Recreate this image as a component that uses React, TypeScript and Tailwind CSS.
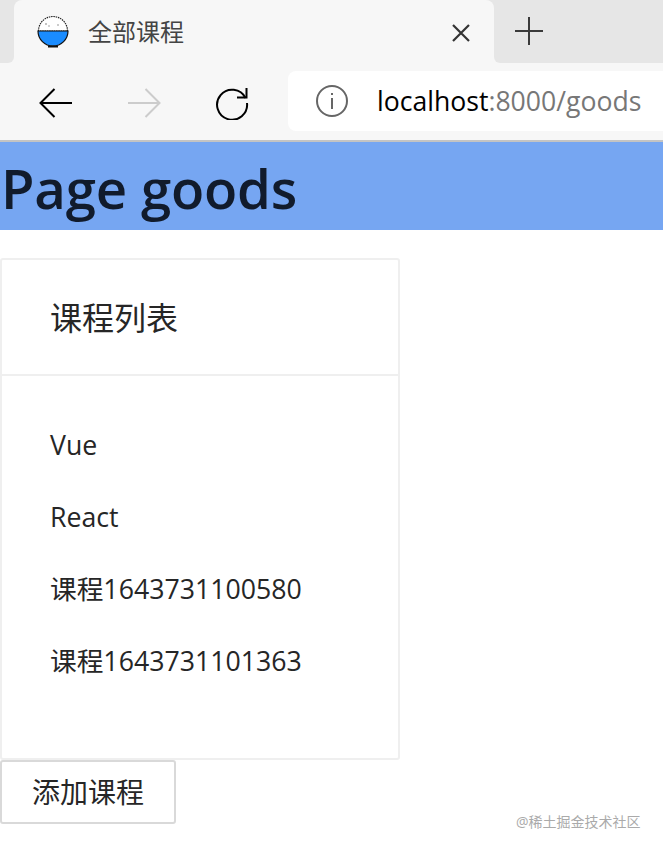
const sans = "font-['Open_Sans','Noto_Sans_CJK_SC',sans-serif]";

function RiceBowl() {
  return (
    <svg width="32" height="32" viewBox="0 0 32 32" className="shrink-0">
      <path d="M1.500 15a14.500 14.500 0 0 1 29 0z" fill="#fff" stroke="#222" strokeWidth="1.200" strokeDasharray="1.500 0.800" />
      <path d="M1 15h30a15 15 0 0 1-30 0z" fill="#1a8cff" stroke="#111" strokeWidth="1.200" />
      <rect x="11" y="29.500" width="10" height="2" fill="#111" />
      <circle cx="9" cy="8" r="0.800" fill="#777" />
      <circle cx="12" cy="10" r="0.800" fill="#999" />
      <circle cx="21" cy="9" r="0.800" fill="#888" />
    </svg>
  );
}

function Arrow({ color, flip }: { color: string; flip?: boolean }) {
  return (
    <svg width="34" height="30" viewBox="0 0 34 30" className={flip ? "-scale-x-100" : ""}>
      <path d="M33 15H2M15.500 1 1.500 15l14 14" fill="none" stroke={color} strokeWidth="2" />
    </svg>
  );
}

export default function App() {
  return (
    <div className={`relative h-[851px] w-[663px] overflow-hidden bg-white ${sans}`}>
      {/* tab strip: the two halves let the grey corners curve into the toolbar */}
      <div className="flex h-[63px] bg-[linear-gradient(#e6e6e6_50%,#f7f7f7_50%)]">
        <div className="w-3.5 rounded-br-md bg-[#e6e6e6]" />
        <div className="flex w-[480px] items-center rounded-t-lg bg-[#f7f7f7] pr-6 pl-[23px]">
          <RiceBowl />
          <span className="ml-[19px] text-2xl text-[#444]">全部课程</span>
          <svg width="18" height="18" viewBox="0 0 18 18" className="mt-0.5 ml-auto">
            <path d="M1 1l16 16M17 1 1 17" stroke="#333" strokeWidth="2.200" />
          </svg>
        </div>
        <div className="flex-1 rounded-bl-md bg-[#e6e6e6] pt-[17px] pl-[21px]">
          <svg width="28" height="28" viewBox="0 0 28 28">
            <path d="M14 0v28M0 14h28" stroke="#3a3a3a" strokeWidth="2" />
          </svg>
        </div>
      </div>

      <div className="flex h-[79px] items-start border-b-2 border-[#c4c4c4] bg-[#f7f7f7]">
        <div className="mt-[23px] ml-[39px] flex items-center">
          <Arrow color="#000" />
          <div className="ml-[54px]">
            <Arrow color="#cccccc" flip />
          </div>
          <svg width="34" height="34" viewBox="0 0 34 34" className="ml-[54px]">
            <path d="M30.500 12A15 15 0 1 0 32 17" fill="none" stroke="#000" strokeWidth="2" />
            <path d="M22 11.500h9.500V2" fill="none" stroke="#000" strokeWidth="2" />
          </svg>
        </div>
        <div className="mt-2 ml-[39px] flex h-[60px] flex-1 items-center rounded-l-lg bg-white pl-[28px]">
          <svg width="32" height="32" viewBox="0 0 32 32" className="shrink-0">
            <circle cx="16" cy="16" r="15" fill="none" stroke="#666" strokeWidth="2" />
            <rect x="15" y="13" width="2" height="11" fill="#666" />
            <rect x="15" y="8" width="2" height="2" fill="#666" />
          </svg>
          <div className="mt-0.5 ml-[29px] text-[26.600px] whitespace-nowrap text-[#777]">
            <span className="text-black">localhost</span>:8000/goods
          </div>
        </div>
      </div>

      <h1 className="flex h-[88px] items-center bg-[#76a6f2] pt-1.5 pl-px text-[54.500px] font-semibold tracking-[-0.2px] text-[#111b2c]">
        Page goods
      </h1>

      <section className="mt-7 h-[502px] w-[400px] rounded-[3px] border-2 border-[#efefef]">
        <header className="flex h-[116px] items-center border-b-2 border-[#efefef] pt-0.5 pl-12 text-[32px] text-[#262626]">
          课程列表
        </header>
        <ul className="pt-[33px] pl-12 text-[26.700px] text-[#262626]">
          {["Vue", "React", "课程1643731100580", "课程1643731101363"].map((course) => (
            <li key={course} className="flex h-[72px] items-center">
              {course}
            </li>
          ))}
        </ul>
      </section>

      <button className="flex h-16 w-[176px] items-center justify-center rounded-[3px] border-2 border-[#d9d9d9] bg-white text-[28px] text-[#262626]">
        添加课程
      </button>

      <span className="absolute top-[812px] left-[516px] text-sm text-[#aaa]">@稀土掘金技术社区</span>
    </div>
  );
}
